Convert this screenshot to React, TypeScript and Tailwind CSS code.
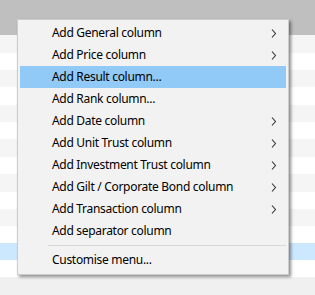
import React from "react";

const rowHeights = [18, 17, 17, 18, 17, 17, 18, 17, 18, 17, 17, 17, 17, 17];

type Item = { label: string; sub?: boolean; active?: boolean };

const items: Item[] = [
  { label: "Add General column", sub: true },
  { label: "Add Price column", sub: true },
  { label: "Add Result column...", active: true },
  { label: "Add Rank column..." },
  { label: "Add Date column", sub: true },
  { label: "Add Unit Trust column", sub: true },
  { label: "Add Investment Trust column", sub: true },
  { label: "Add Gilt / Corporate Bond column", sub: true },
  { label: "Add Transaction column", sub: true },
  { label: "Add separator column" },
];

function Chevron() {
  return (
    <svg width="6" height="9" viewBox="0 0 6 9" className="block">
      <polyline points="1,0.5 4.5,4.5 1,8.5" fill="none" stroke="#333" strokeWidth="1.1" />
    </svg>
  );
}

function MenuRow({ item }: { item: Item }) {
  return (
    <div
      className={`mx-[2px] h-[22px] flex items-center pl-[32px] pr-[9px] ${
        item.active ? "bg-[#91c9f7]" : ""
      }`}
    >
      <span className="flex-1 leading-[22px] tracking-[-0.3px]">{item.label}</span>
      {item.sub ? <Chevron /> : null}
    </div>
  );
}

export default function App() {
  return (
    <div
      className="relative w-[315px] h-[295px] overflow-hidden bg-[#f0f0f0]"
      style={{ fontFamily: '"Noto Sans", "Open Sans", sans-serif' }}
    >
      <div className="h-[35px] bg-[#bfbfbf]" />
      {rowHeights.map((h, i) => (
        <div
          key={i}
          style={{ height: h }}
          className={
            i === 12 ? "bg-[#cce8ff]" : i % 2 === 0 ? "bg-[#f5f5f5]" : "bg-white"
          }
        />
      ))}

      <div className="absolute left-[17px] top-[19px] w-[272px] border border-[#cccccc] bg-[#f2f2f2] pt-[2px] pb-[3px] text-[12px] text-black shadow-[2px_2px_3px_rgba(0,0,0,0.45)]">
        {items.map((it) => (
          <MenuRow key={it.label} item={it} />
        ))}
        <div className="h-[7px] flex items-center pl-[30px] pr-[2px]">
          <div className="h-px flex-1 bg-[#d7d7d7]" />
        </div>
        <MenuRow item={{ label: "Customise menu..." }} />
      </div>
    </div>
  );
}
